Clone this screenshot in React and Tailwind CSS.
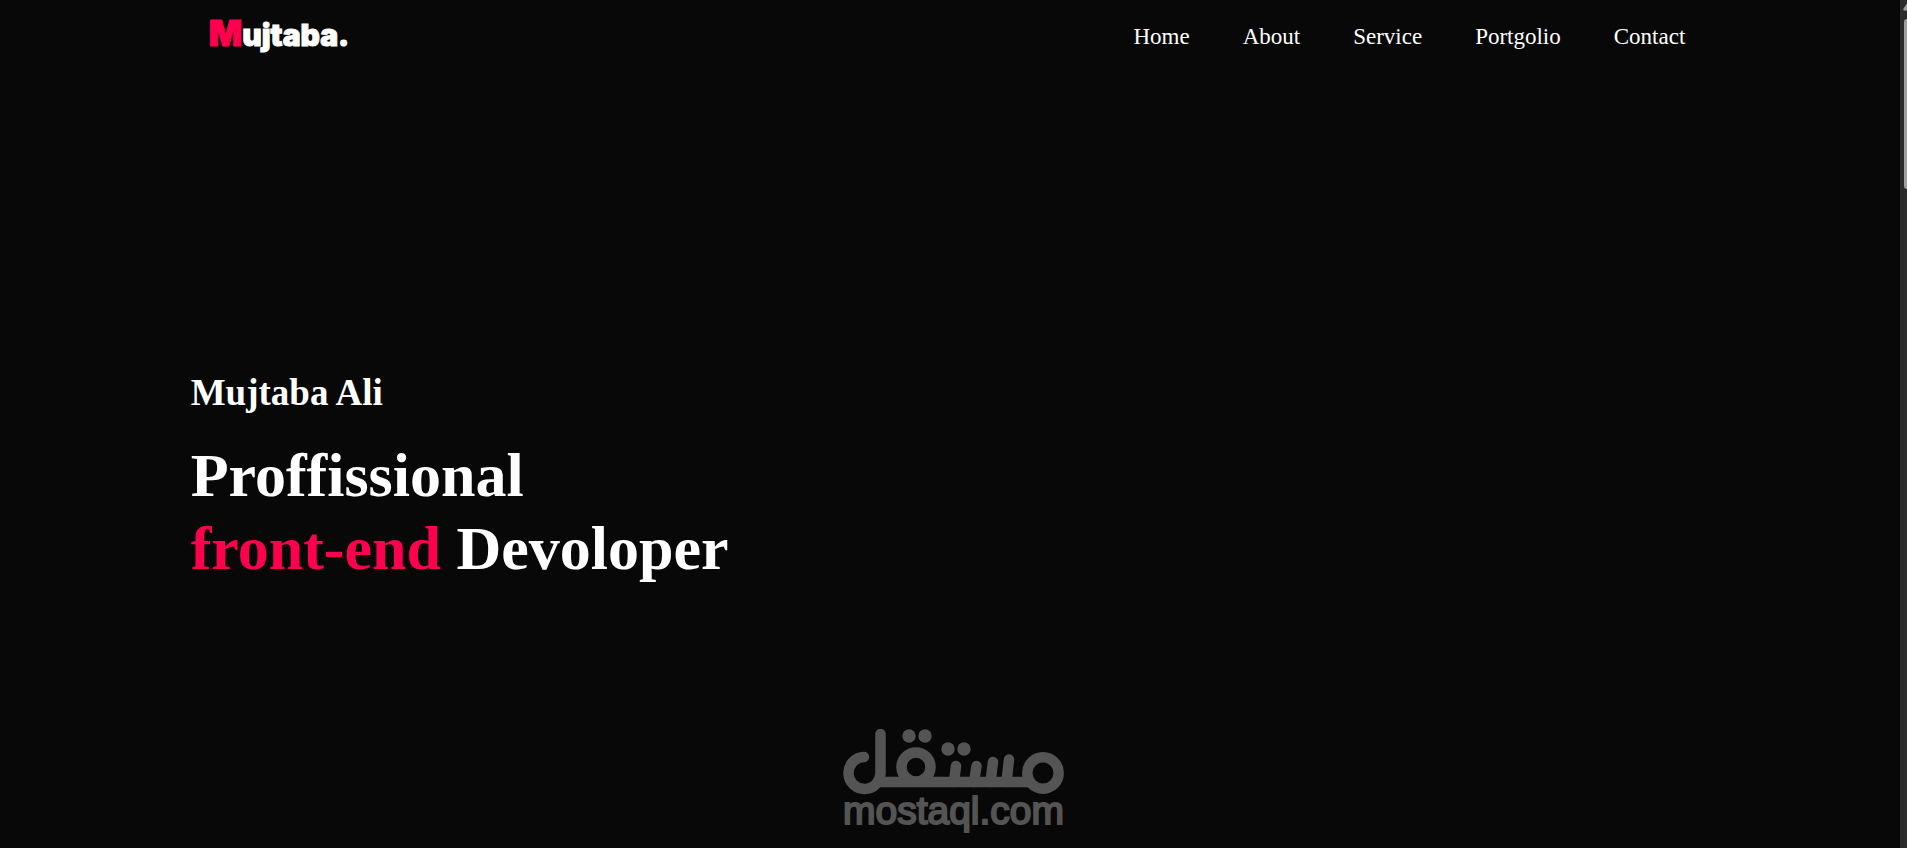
import React from 'react';

const links = ['Home', 'About', 'Service', 'Portgolio', 'Contact'];

function Logo() {
  return (
    <a href="#home" className="flex items-baseline font-[Inter,sans-serif] font-black leading-[34px] [-webkit-text-stroke:1px_currentColor]">
      <span className="text-[35px] text-[#ff004f]">M</span>
      <span className="text-[30px] text-white">ujtaba.</span>
    </a>
  );
}

function Header() {
  return (
    <header className="flex items-start justify-between py-4 pl-[18px] pr-6">
      <Logo />
      <nav>
        <ul className="flex gap-[53px]">
          {links.map((link) => (
            <li key={link} className="leading-[42px]">
              <a href={`#${link.toLowerCase()}`} className="text-[23px] text-white">
                {link}
              </a>
            </li>
          ))}
        </ul>
      </nav>
    </header>
  );
}

function Watermark() {
  return (
    <div className="pointer-events-none absolute inset-x-0 bottom-[21px] flex flex-col items-center text-[#545454]">
      <svg width="222" height="66" viewBox="0 0 222 66" fill="none" stroke="currentColor" strokeWidth="10.5" strokeLinecap="round" aria-hidden="true">
        {/* lam, qaf, teeth, meem */}
        <path d="M21 28A16 16 0 1 0 37.500 44V5" />
        <path d="M34 53H187" strokeLinecap="butt" />
        <circle cx="73" cy="38" r="14.5" />
        <path d="M113 37L111 53M133.500 37L131 53M150 33L147.500 53M166 30.500L163.500 53" />
        <circle cx="200" cy="44" r="15.7" />
        <g fill="currentColor" stroke="none">
          <circle cx="66" cy="7" r="6.700" />
          <circle cx="82" cy="7" r="6.700" />
          <circle cx="105" cy="20" r="6.700" />
          <circle cx="121" cy="20" r="6.700" />
        </g>
      </svg>
      <span className="font-['Liberation_Sans',sans-serif] text-[39px] leading-8 [-webkit-text-stroke:2px_currentColor] [stroke-linejoin:round]">
        mostaql.com
      </span>
    </div>
  );
}

function Scrollbar() {
  return (
    <div className="flex w-[7px] shrink-0 flex-col items-end overflow-hidden bg-[#2c2c2c]" aria-hidden="true">
      <svg width="4" height="19" viewBox="0 0 4 19" fill="#9f9f9f">
        <path d="M4 3.500L.5 8.500q-.7 2 1 2H4z" />
      </svg>
      <div className="h-[170px] w-[3px] rounded-l-[3px] bg-[#9f9f9f]" />
    </div>
  );
}

export default function App() {
  return (
    <div className="relative flex min-h-screen bg-[#080808] font-['Liberation_Serif',serif] text-white">
      <div className="min-w-0 flex-1 px-[10%]">
        <Header />
        <main className="pt-[297px] font-bold">
          <h2 className="text-[37px] leading-10">Mujtaba Ali</h2>
          <h1 className="mt-[26px] text-[62px] leading-[73px]">
            Proffissional
            <br />
            <span className="text-[#ff004f]">front-end</span> Devoloper
          </h1>
        </main>
      </div>
      <Scrollbar />
      <Watermark />
    </div>
  );
}
